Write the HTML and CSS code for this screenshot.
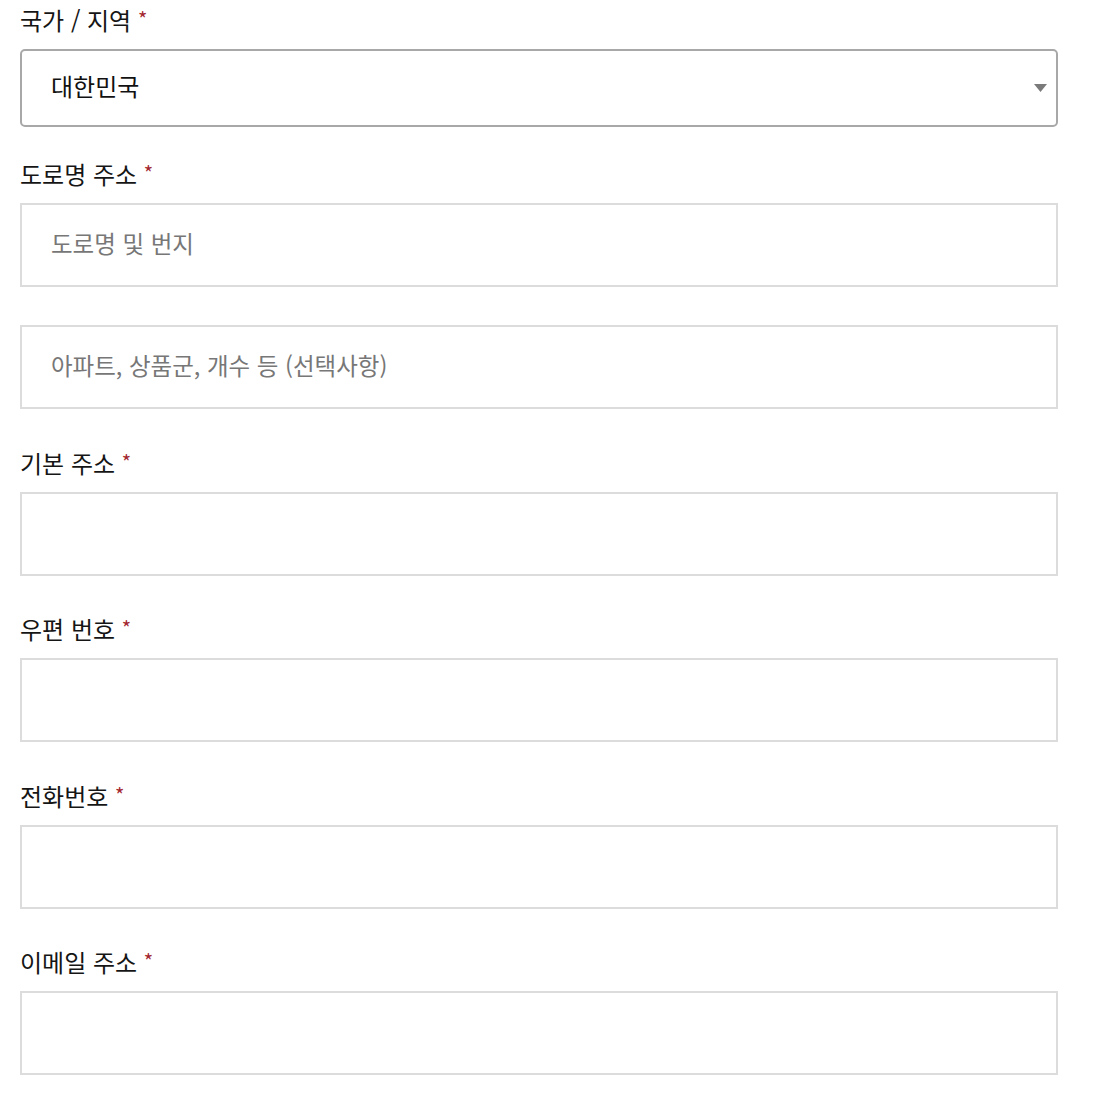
FILE: index.html
```html
<!DOCTYPE html>
<html lang="ko">
<head>
<meta charset="utf-8">
<link rel="stylesheet" href="styles.css">
</head>
<body>
<form class="form">
  <div class="field field-select">
    <label class="label">국가 / 지역 <span class="req">*</span></label>
    <div class="select-wrap">
      <select class="control select"><option>대한민국</option></select>
      <svg class="arrow" width="13" height="8" viewBox="0 0 13 8"><path d="M0 0H13L6.5 8Z" fill="#7a7a7a"/></svg>
    </div>
  </div>
  <div class="field">
    <label class="label">도로명 주소 <span class="req">*</span></label>
    <input class="control" type="text" placeholder="도로명 및 번지">
    <input class="control second" type="text" placeholder="아파트, 상품군, 개수 등 (선택사항)">
  </div>
  <div class="field">
    <label class="label">기본 주소 <span class="req">*</span></label>
    <input class="control" type="text">
  </div>
  <div class="field">
    <label class="label">우편 번호 <span class="req">*</span></label>
    <input class="control" type="text">
  </div>
  <div class="field">
    <label class="label">전화번호 <span class="req">*</span></label>
    <input class="control" type="text">
  </div>
  <div class="field">
    <label class="label">이메일 주소 <span class="req">*</span></label>
    <input class="control" type="text">
  </div>
</form>
</body>
</html>
```
FILE: styles.css
```css
* { box-sizing: border-box; }
html, body { margin: 0; padding: 0; background: #fff; }
body {
  font-family: "Noto Sans CJK KR", "Noto Sans", sans-serif;
  color: #111;
}
.form {
  width: 1038px;
  margin-left: 20px;
  padding-top: 2px;
  display: flex;
  flex-direction: column;
  gap: 35.5px;
}
.field {
  display: flex;
  flex-direction: column;
}
.field-select { margin-bottom: -6.5px; }
.label {
  display: block;
  height: 36px;
  font-size: 24px;
  line-height: 36px;
  margin-bottom: 11px;
  color: #151515;
}
.req {
  position: relative;
  top: -3px;
  line-height: 1;
  color: #a3262e;
  font-size: 20px;
}
.control {
  display: block;
  width: 100%;
  height: 84px;
  border: 2px solid #dcdcdc;
  border-radius: 0;
  padding: 0 29px 5px;
  font-family: inherit;
  font-size: 23.5px;
  color: #111;
  background: #fff;
  outline: none;
}
.control::placeholder { color: #777; }
.second { margin-top: 38px; }
.select-wrap { position: relative; }
.select {
  appearance: none;
  -webkit-appearance: none;
  height: 78px;
  padding-bottom: 5px;
  font-size: 24px;
  border-color: #a8a8a8;
  border-radius: 5px;
}
.arrow {
  position: absolute;
  right: 11px;
  top: 35px;
  pointer-events: none;
}
```
